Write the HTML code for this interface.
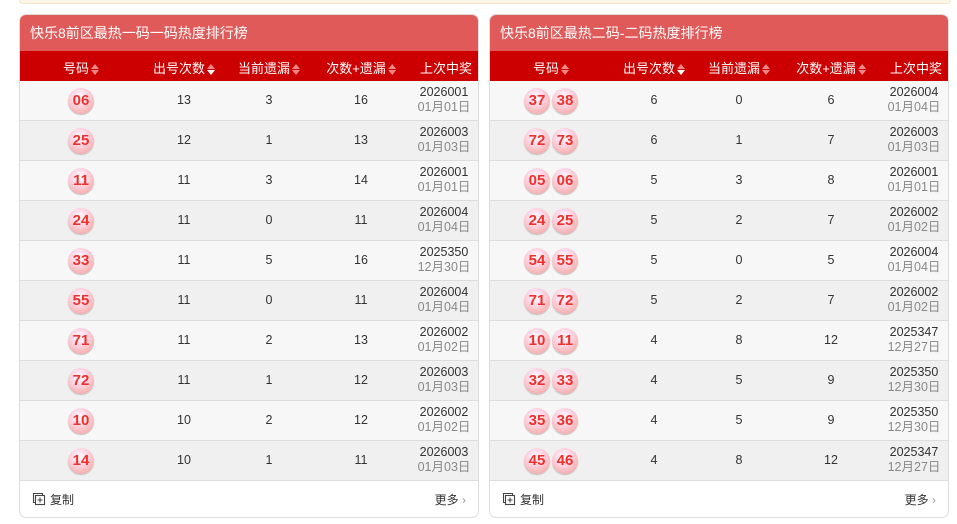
<!DOCTYPE html><html><head><meta charset="utf-8"><style>
body{margin:0;width:957px;height:524px;background:#fff;font-family:"Liberation Sans","Noto Sans CJK SC",sans-serif;position:relative;overflow:hidden}
.top{position:absolute;left:19px;top:0;width:930px;height:3px;background:#fdf6e8;border:1px solid #f3e6c8;border-top:none;border-radius:0 0 4px 4px}
.p{position:absolute;top:14px;width:458px;height:502px;border:1px solid #ddd;border-radius:7px;overflow:hidden;background:#fff}
.t{height:36px;background:#e05a5a;color:#fff;font-size:14px;line-height:36px;padding-left:10px}
.h{height:30px;background:#cc0000;color:#fff;font-size:13px;position:relative}
.h span,.r span{position:absolute;transform:translateX(-50%);white-space:nowrap}
.h span{top:7px}
.ar{display:inline-block;vertical-align:middle;width:8px;height:12px;position:relative;margin-left:2px}
.ar:before,.ar:after{content:"";position:absolute;left:0;border-left:4px solid transparent;border-right:4px solid transparent}
.ar:before{top:0;border-bottom:5px solid #e88}
.ar:after{top:6px;border-top:5px solid #e88}
.ar.d:after{border-top-color:#fff}
.r{height:39px;border-bottom:1px solid #ddd;position:relative;font-size:12.5px;color:#333}
.r:nth-child(odd){background:#f7f7f7}.r:nth-child(even){background:#f0f0f0}
.r span.n{top:12px}
.r span.d{top:4px;text-align:center;line-height:15px}
.r span.d i{font-style:normal;color:#888}
.b{display:inline-block;width:26px;height:26px;border-radius:50%;background:radial-gradient(circle at 45% 35%,#fff 0%,#fde 30%,#f7b5b5 70%,#e99 100%);color:#f0302a;font-weight:bold;font-size:15px;text-align:center;line-height:26px;margin:0 1px;box-shadow:0 1px 1px #bbb}
.r span.bb{top:7px}
.f{height:37px;position:relative;font-size:12px;color:#333}
.cp{position:absolute;left:12px;top:10px}
.more{position:absolute;right:12px;top:10px}
</style></head><body><div class="top"></div>
<div class="p" style="left:19px"><div class="t">快乐8前区最热一码一码热度排行榜</div>
<div class="h"><span style="left:61px">号码<i class="ar"></i></span><span style="left:164px">出号次数<i class="ar d"></i></span><span style="left:249px">当前遗漏<i class="ar"></i></span><span style="left:341px">次数+遗漏<i class="ar"></i></span><span style="left:426px">上次中奖</span></div>
<div>
<div class="r"><span class="bb" style="left:61px"><b class="b">06</b></span><span class="n" style="left:164px">13</span><span class="n" style="left:249px">3</span><span class="n" style="left:341px">16</span><span class="d" style="left:424px">2026001<br><i>01月01日</i></span></div>
<div class="r"><span class="bb" style="left:61px"><b class="b">25</b></span><span class="n" style="left:164px">12</span><span class="n" style="left:249px">1</span><span class="n" style="left:341px">13</span><span class="d" style="left:424px">2026003<br><i>01月03日</i></span></div>
<div class="r"><span class="bb" style="left:61px"><b class="b">11</b></span><span class="n" style="left:164px">11</span><span class="n" style="left:249px">3</span><span class="n" style="left:341px">14</span><span class="d" style="left:424px">2026001<br><i>01月01日</i></span></div>
<div class="r"><span class="bb" style="left:61px"><b class="b">24</b></span><span class="n" style="left:164px">11</span><span class="n" style="left:249px">0</span><span class="n" style="left:341px">11</span><span class="d" style="left:424px">2026004<br><i>01月04日</i></span></div>
<div class="r"><span class="bb" style="left:61px"><b class="b">33</b></span><span class="n" style="left:164px">11</span><span class="n" style="left:249px">5</span><span class="n" style="left:341px">16</span><span class="d" style="left:424px">2025350<br><i>12月30日</i></span></div>
<div class="r"><span class="bb" style="left:61px"><b class="b">55</b></span><span class="n" style="left:164px">11</span><span class="n" style="left:249px">0</span><span class="n" style="left:341px">11</span><span class="d" style="left:424px">2026004<br><i>01月04日</i></span></div>
<div class="r"><span class="bb" style="left:61px"><b class="b">71</b></span><span class="n" style="left:164px">11</span><span class="n" style="left:249px">2</span><span class="n" style="left:341px">13</span><span class="d" style="left:424px">2026002<br><i>01月02日</i></span></div>
<div class="r"><span class="bb" style="left:61px"><b class="b">72</b></span><span class="n" style="left:164px">11</span><span class="n" style="left:249px">1</span><span class="n" style="left:341px">12</span><span class="d" style="left:424px">2026003<br><i>01月03日</i></span></div>
<div class="r"><span class="bb" style="left:61px"><b class="b">10</b></span><span class="n" style="left:164px">10</span><span class="n" style="left:249px">2</span><span class="n" style="left:341px">12</span><span class="d" style="left:424px">2026002<br><i>01月02日</i></span></div>
<div class="r"><span class="bb" style="left:61px"><b class="b">14</b></span><span class="n" style="left:164px">10</span><span class="n" style="left:249px">1</span><span class="n" style="left:341px">11</span><span class="d" style="left:424px">2026003<br><i>01月03日</i></span></div>
</div>
<div class="f"><span class="cp"><svg width="14" height="14" viewBox="0 0 14 14" style="vertical-align:-2px;margin-right:4px" fill="none" stroke="#444" stroke-width="1.1"><path d="M3 10.5H1.5V1.5h9V3"/><rect x="3.5" y="3.5" width="9" height="9"/><path d="M8 5.5v5M5.5 8h5"/></svg>复制</span><span class="more">更多 <span style="color:#999">›</span></span></div></div>

<div class="p" style="left:489px"><div class="t">快乐8前区最热二码-二码热度排行榜</div>
<div class="h"><span style="left:61px">号码<i class="ar"></i></span><span style="left:164px">出号次数<i class="ar d"></i></span><span style="left:249px">当前遗漏<i class="ar"></i></span><span style="left:341px">次数+遗漏<i class="ar"></i></span><span style="left:426px">上次中奖</span></div>
<div>
<div class="r"><span class="bb" style="left:61px"><b class="b">37</b><b class="b">38</b></span><span class="n" style="left:164px">6</span><span class="n" style="left:249px">0</span><span class="n" style="left:341px">6</span><span class="d" style="left:424px">2026004<br><i>01月04日</i></span></div>
<div class="r"><span class="bb" style="left:61px"><b class="b">72</b><b class="b">73</b></span><span class="n" style="left:164px">6</span><span class="n" style="left:249px">1</span><span class="n" style="left:341px">7</span><span class="d" style="left:424px">2026003<br><i>01月03日</i></span></div>
<div class="r"><span class="bb" style="left:61px"><b class="b">05</b><b class="b">06</b></span><span class="n" style="left:164px">5</span><span class="n" style="left:249px">3</span><span class="n" style="left:341px">8</span><span class="d" style="left:424px">2026001<br><i>01月01日</i></span></div>
<div class="r"><span class="bb" style="left:61px"><b class="b">24</b><b class="b">25</b></span><span class="n" style="left:164px">5</span><span class="n" style="left:249px">2</span><span class="n" style="left:341px">7</span><span class="d" style="left:424px">2026002<br><i>01月02日</i></span></div>
<div class="r"><span class="bb" style="left:61px"><b class="b">54</b><b class="b">55</b></span><span class="n" style="left:164px">5</span><span class="n" style="left:249px">0</span><span class="n" style="left:341px">5</span><span class="d" style="left:424px">2026004<br><i>01月04日</i></span></div>
<div class="r"><span class="bb" style="left:61px"><b class="b">71</b><b class="b">72</b></span><span class="n" style="left:164px">5</span><span class="n" style="left:249px">2</span><span class="n" style="left:341px">7</span><span class="d" style="left:424px">2026002<br><i>01月02日</i></span></div>
<div class="r"><span class="bb" style="left:61px"><b class="b">10</b><b class="b">11</b></span><span class="n" style="left:164px">4</span><span class="n" style="left:249px">8</span><span class="n" style="left:341px">12</span><span class="d" style="left:424px">2025347<br><i>12月27日</i></span></div>
<div class="r"><span class="bb" style="left:61px"><b class="b">32</b><b class="b">33</b></span><span class="n" style="left:164px">4</span><span class="n" style="left:249px">5</span><span class="n" style="left:341px">9</span><span class="d" style="left:424px">2025350<br><i>12月30日</i></span></div>
<div class="r"><span class="bb" style="left:61px"><b class="b">35</b><b class="b">36</b></span><span class="n" style="left:164px">4</span><span class="n" style="left:249px">5</span><span class="n" style="left:341px">9</span><span class="d" style="left:424px">2025350<br><i>12月30日</i></span></div>
<div class="r"><span class="bb" style="left:61px"><b class="b">45</b><b class="b">46</b></span><span class="n" style="left:164px">4</span><span class="n" style="left:249px">8</span><span class="n" style="left:341px">12</span><span class="d" style="left:424px">2025347<br><i>12月27日</i></span></div>
</div>
<div class="f"><span class="cp"><svg width="14" height="14" viewBox="0 0 14 14" style="vertical-align:-2px;margin-right:4px" fill="none" stroke="#444" stroke-width="1.1"><path d="M3 10.5H1.5V1.5h9V3"/><rect x="3.5" y="3.5" width="9" height="9"/><path d="M8 5.5v5M5.5 8h5"/></svg>复制</span><span class="more">更多 <span style="color:#999">›</span></span></div></div>
</body></html>
